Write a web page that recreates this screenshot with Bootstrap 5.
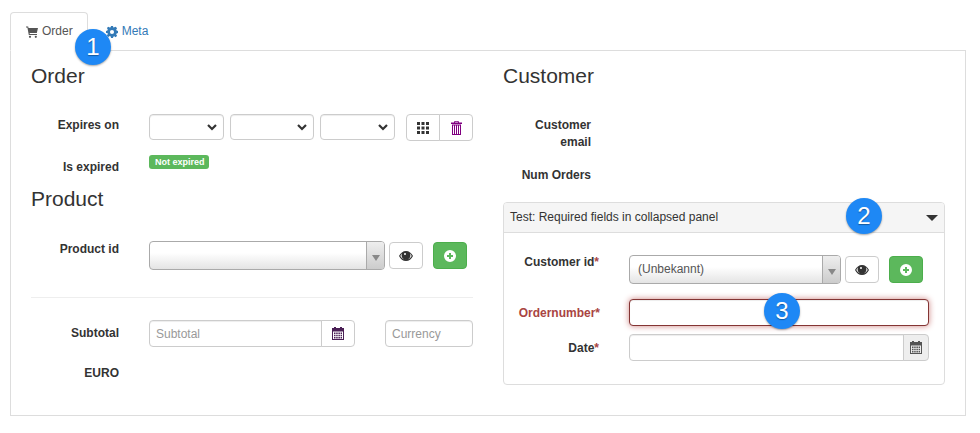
<!DOCTYPE html>
<html lang="en">
<head>
<meta charset="utf-8">
<title>Order</title>
<link href="https://cdn.jsdelivr.net/npm/bootstrap@5.3.0/dist/css/bootstrap.min.css" rel="stylesheet">
<style>
html,body{height:433px;overflow:hidden}
body{font-family:"Liberation Sans",Arial,sans-serif;font-size:12px;line-height:17px;color:#333;background:#fff}
.pg{position:relative;padding:12px 14px 0 10px;height:433px}
.nav-tabs{--bs-nav-tabs-border-color:#ddd;--bs-nav-tabs-border-radius:4px;--bs-nav-tabs-link-active-border-color:#ddd #ddd #fff;--bs-nav-tabs-link-active-color:#555;gap:2px}
.nav-tabs .nav-link{padding:10px 14px 10px 15px;font-size:12px;line-height:17px;color:#337ab7;display:flex;align-items:center;gap:4px}
.nav-tabs .nav-link.active{color:#555}
.pane{border:1px solid #ddd;border-top:0;height:365px;padding:13px 20px 0 20px}
.cols{--bs-gutter-x:30px}
.ttl{font-size:21px;line-height:23px;font-weight:400;margin:0;color:#333}
.fld{display:flex}
.lbl{flex:0 0 88px;width:88px;margin-right:30px;text-align:right;font-weight:700;margin-bottom:0}
.lbl2{flex:0 0 95px;width:95px}
.lbl3{margin-right:29px;flex-basis:96px;width:96px}
.pt3{padding-top:3px}
.pt4{padding-top:4px}
.pt5{padding-top:5px}
.pt6{padding-top:6px}
.up1{margin-top:-1px}
.req{color:#a94442}
.gap6{gap:6px}
.sel{height:26px;padding:0 20px 0 6px;font-size:12px;border-color:#ccc;border-radius:4px;background-image:url("data:image/svg+xml,%3csvg xmlns='http://www.w3.org/2000/svg' viewBox='0 0 10 7'%3e%3cpath fill='none' stroke='%23333' stroke-width='2.200' d='M1 1l4 4 4-4'/%3e%3c/svg%3e");background-position:right 6px center;background-size:10px 7px;box-shadow:inset 0 1px 1px rgba(0,0,0,.075)}
.sel1{width:75px}.sel2{width:84px}.sel3{width:75px}
.bgrp{margin-left:11px}
.bgrp .btn,.ibtn{height:27px;width:34px;padding:0;border:1px solid #ccc;background:#fff;display:flex;align-items:center;justify-content:center;--bs-btn-border-radius:4px}
.ok{font-size:9px;line-height:10px;padding:2px 6px;height:14px;width:60px;background:#5cb85c;border-radius:3px;color:#fff;font-weight:700;display:block;white-space:nowrap;text-align:center}
.combo{display:flex;height:29px;border:1px solid #aaa;border-radius:4px;background:linear-gradient(#fff 40%,#e4e4e4);overflow:hidden;font-size:12px;color:#555;align-items:center}
.combo-t{flex:1 1 auto;padding-left:8px}
.combo-a{flex:0 0 18px;align-self:stretch;border-left:1px solid #aaa;background:linear-gradient(#eee,#ccc);display:flex;align-items:center;justify-content:center;padding-top:4px}
.combo-a i{display:block;width:0;height:0;border:4px solid transparent;border-top:6px solid #888;border-bottom:0}
.cw1{width:236px}.cw2{width:212px}
.ibtn{margin-left:4px;margin-top:1px}
.addb{margin-left:10px;margin-top:1px;background:#5cb85c;border-color:#4cae4c}
.rule{margin:27px 0 22px;border:0;border-top:1px solid #eee;opacity:1}
.igrp{height:27px;flex-wrap:nowrap}
.igrp .form-control,.inp{font-size:12px;height:27px;padding:0 6px;border-color:#ccc;border-radius:4px;box-shadow:inset 0 1px 1px rgba(0,0,0,.075);color:#555}
.igrp .form-control{min-height:0}
.igrp .input-group-text{width:34px;padding:0;justify-content:center;background:#fff;border-color:#ccc;border-radius:0 4px 4px 0}
.igrp .dark{width:26px;background:#eee}
.form-control::placeholder{color:#999}
.sub{width:206px}
.cur{width:88px;margin-left:30px;flex:none}
.pnl{--bs-card-border-color:#ddd;--bs-card-border-radius:4px;--bs-card-inner-border-radius:3px;height:183px;margin-top:18px;color:#333}
.pnl .card-header{background:#f5f5f5;height:30px;padding:6px 6px;font-size:12px;line-height:17px;border-color:#ddd;display:flex;justify-content:space-between;align-items:center;color:#333}
.tri{display:block;width:0;height:0;border:6px solid transparent;border-top:6px solid #333;border-bottom:0}
.pnl .card-body{padding:22px 15px 0 0}
.err{color:#a94442}
.inp-err{border-color:#843534;box-shadow:inset 0 1px 1px rgba(0,0,0,.075),0 0 6px #ce8483}
.wf{width:300px}
.num{position:absolute;width:36px;height:36px;border-radius:50%;background:#1e88f5;color:#fff;font-size:24px;line-height:36px;text-align:center;box-shadow:0 1px 2px rgba(0,0,0,.35);text-shadow:0 1px 1px rgba(0,0,0,.35)}
.n1{left:75px;top:29px}.n2{left:846px;top:198px}.n3{left:764px;top:293px}
.mt-row1{margin-top:27px}
.mt-row2{margin-top:14px}
.mt-h2{margin-top:11px}
.mt-row3{margin-top:31px}
.mt-row5{margin-top:18px}
.mt-r1{margin-top:30px}
.mt-r2{margin-top:16px}
.mt-p2{margin-top:15px}
.mt-p3{margin-top:8px}
</style>
</head>
<body>
<div class="pg">
  <ul class="nav nav-tabs">
    <li class="nav-item"><a class="nav-link active" href="#"><svg width="12" height="12" viewBox="0 0 12 12"><path fill="#555" d="M0 .5h2.200l.3 1.500H12l-1.200 5H3.600l.2 1H11v1H2.800L1.400 1.500H0z"/><circle cx="4" cy="10.800" r="1.100" fill="#555"/><circle cx="9.800" cy="10.800" r="1.100" fill="#555"/></svg>Order</a></li>
    <li class="nav-item"><a class="nav-link" href="#"><svg width="12" height="12" viewBox="0 0 12 12"><path fill="#337ab7" fill-rule="evenodd" d="M5 0h2l.3 1.600 1-.4L9.700.8l1.400 1.400-.9 1.400.4 1 1.400.4v2l-1.400.4-.4 1 .9 1.400-1.400 1.400-1.400-.9-1 .4L7 12H5l-.3-1.600-1-.4-1.400.9L.9 9.500l.9-1.400-.4-1L0 6.900v-2l1.400-.4.4-1-.9-1.400L2.300.7l1.400.9 1-.4zM6 3.900a2 2 0 1 0 0 4.100 2 2 0 0 0 0-4.100z"/></svg>Meta</a></li>
  </ul>
  <div class="pane">
    <div class="row cols">
      <div class="col-6">
        <h3 class="ttl">Order</h3>
        <div class="fld mt-row1">
          <label class="lbl pt3">Expires on</label>
          <div class="d-flex gap6">
            <select class="form-select sel sel1"><option></option></select>
            <select class="form-select sel sel2"><option></option></select>
            <select class="form-select sel sel3"><option></option></select>
          </div>
          <div class="btn-group bgrp">
            <button class="btn" type="button"><svg width="12" height="12" viewBox="0 0 12 12"><path fill="#333" d="M0 0h3v3H0zM4.500 0h3v3h-3zM9 0h3v3H9zM0 4.500h3v3H0zM4.500 4.500h3v3h-3zM9 4.500h3v3H9zM0 9h3v3H0zM4.500 9h3v3h-3zM9 9h3v3H9z"/></svg></button>
            <button class="btn" type="button"><svg width="11" height="14" viewBox="0 0 11 14"><path fill="#800080" fill-rule="evenodd" d="M3.500 0h4l.5 1.500h3V3H0V1.500h3zM4.200 .8l-.2.7h3l-.2-.7zM1 3.500h9V14H1zM2 4.500v8.500h1V4.500zM4 4.500v8.500h1V4.500zM6 4.500v8.500h1V4.500zM8 4.500v8.500h1V4.500z"/></svg></button>
          </div>
        </div>
        <div class="fld mt-row2">
          <label class="lbl pt4">Is expired</label>
          <span class="ok">Not expired</span>
        </div>
        <h3 class="ttl mt-h2">Product</h3>
        <div class="fld mt-row3">
          <label class="lbl">Product id</label>
          <div class="combo cw1"><span class="combo-t"></span><span class="combo-a"><i></i></span></div>
          <button class="btn ibtn" type="button"><svg width="14" height="10" viewBox="0 0 14 10"><path fill="#333" fill-rule="evenodd" d="M7 0c3 0 5.500 2 7 5-1.500 3-4 5-7 5S1.500 8 0 5c1.500-3 4-5 7-5zM3 2.600C2.300 3.200 1.700 4 1.300 5 2.500 7.300 4.600 8.800 7 8.800s4.500-1.500 5.700-3.800c-.4-1-1-1.800-1.700-2.400.3.600.4 1.200.4 1.900a4.400 4.400 0 0 1-8.800 0c0-.7.100-1.300.4-1.900zM6 2a1 1 0 1 0 0 2 1 1 0 0 0 0-2z"/></svg></button>
          <button class="btn ibtn addb" type="button"><svg width="12" height="12" viewBox="0 0 12 12"><path fill="#fff" fill-rule="evenodd" d="M6 0a6 6 0 1 1 0 12A6 6 0 0 1 6 0zM5 3v2H3v2h2v2h2V7h2V5H7V3z"/></svg></button>
        </div>
        <hr class="rule">
        <div class="fld">
          <label class="lbl pt5">Subtotal</label>
          <div class="input-group igrp sub"><input class="form-control" placeholder="Subtotal"><span class="input-group-text"><svg width="12" height="13" viewBox="0 0 12 13"><path fill="#4a1f55" fill-rule="evenodd" d="M2 0h2v1h4V0h2v1h2v12H0V1h2zM1 4.500v7.500h10V4.500zM2 5.500h1.500v1.500H2zM4.200 5.500h1.500v1.500H4.200zM6.400 5.500h1.500v1.500H6.400zM8.600 5.500h1.400v1.500H8.600zM2 7.800h1.500v1.500H2zM4.200 7.800h1.500v1.500H4.200zM6.400 7.800h1.500v1.500H6.400zM8.600 7.800h1.400v1.500H8.600zM2 10h1.500v1.500H2zM4.200 10h1.500v1.500H4.200zM6.400 10h1.500v1.500H6.400zM8.600 10h1.400v1.500H8.600z"/></svg></span></div>
          <input class="form-control inp cur" placeholder="Currency">
        </div>
        <div class="fld mt-row5"><label class="lbl">EURO</label></div>
      </div>
      <div class="col-6">
        <h3 class="ttl">Customer</h3>
        <div class="fld mt-r1"><label class="lbl">Customer email</label></div>
        <div class="fld mt-r2"><label class="lbl">Num Orders</label></div>
        <div class="card pnl">
          <div class="card-header"><span>Test: Required fields in collapsed panel</span><i class="tri"></i></div>
          <div class="card-body">
            <div class="fld">
              <label class="lbl lbl2 up1">Customer id<span class="req">*</span></label>
              <div class="combo cw2"><span class="combo-t">(Unbekannt)</span><span class="combo-a"><i></i></span></div>
              <button class="btn ibtn" type="button"><svg width="14" height="10" viewBox="0 0 14 10"><path fill="#333" fill-rule="evenodd" d="M7 0c3 0 5.500 2 7 5-1.500 3-4 5-7 5S1.500 8 0 5c1.500-3 4-5 7-5zM3 2.600C2.300 3.200 1.700 4 1.300 5 2.500 7.300 4.600 8.800 7 8.800s4.500-1.500 5.700-3.800c-.4-1-1-1.800-1.700-2.400.3.600.4 1.200.4 1.900a4.400 4.400 0 0 1-8.800 0c0-.7.100-1.300.4-1.900zM6 2a1 1 0 1 0 0 2 1 1 0 0 0 0-2z"/></svg></button>
              <button class="btn ibtn addb" type="button"><svg width="12" height="12" viewBox="0 0 12 12"><path fill="#fff" fill-rule="evenodd" d="M6 0a6 6 0 1 1 0 12A6 6 0 0 1 6 0zM5 3v2H3v2h2v2h2V7h2V5H7V3z"/></svg></button>
            </div>
            <div class="fld mt-p2">
              <label class="lbl lbl2 err pt6 lbl3">Ordernumber*</label>
              <input class="form-control inp inp-err wf">
            </div>
            <div class="fld mt-p3">
              <label class="lbl lbl2 pt6">Date<span class="req">*</span></label>
              <div class="input-group igrp wf"><input class="form-control"><span class="input-group-text dark"><svg width="12" height="13" viewBox="0 0 12 13"><path fill="#555" fill-rule="evenodd" d="M2 0h2v1h4V0h2v1h2v12H0V1h2zM1 4.500v7.500h10V4.500zM2 5.500h1.500v1.500H2zM4.200 5.500h1.500v1.500H4.200zM6.400 5.500h1.500v1.500H6.400zM8.600 5.500h1.400v1.500H8.600zM2 7.800h1.500v1.500H2zM4.200 7.800h1.500v1.500H4.200zM6.400 7.800h1.500v1.500H6.400zM8.600 7.800h1.400v1.500H8.600zM2 10h1.500v1.500H2zM4.200 10h1.500v1.500H4.200zM6.400 10h1.500v1.500H6.400zM8.600 10h1.400v1.500H8.600z"/></svg></span></div>
            </div>
          </div>
        </div>
      </div>
    </div>
  </div>
  <span class="num n1">1</span>
  <span class="num n2">2</span>
  <span class="num n3">3</span>
</div>
<script src="https://cdn.jsdelivr.net/npm/bootstrap@5.3.0/dist/js/bootstrap.bundle.min.js"></script>
</body>
</html>
